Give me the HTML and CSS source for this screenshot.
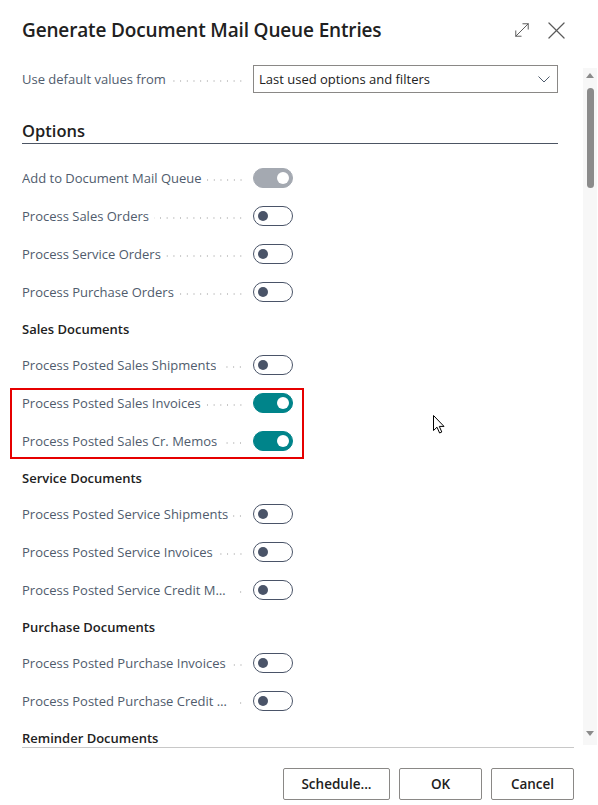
FILE: index.html
```html
<!DOCTYPE html>
<html lang="en">
<head>
<meta charset="utf-8">
<title>Generate Document Mail Queue Entries</title>
<link rel="stylesheet" href="styles.css">
</head>
<body>
<div class="dialog">
  <header class="head">
    <h1 class="title">Generate Document Mail Queue Entries</h1>
    <div class="head-icons">
      <svg class="icon-expand" width="18" height="18" viewBox="0 0 18 18" fill="none" stroke="#5a5a5a" stroke-width="1.1" stroke-linecap="round">
        <path d="M2 16 L16 2"/><path d="M10 2 H16 V8"/><path d="M2 10 V16 H8"/>
      </svg>
      <svg class="icon-close" width="18" height="18" viewBox="0 0 18 18" fill="none" stroke="#5a5a5a" stroke-width="1.3" stroke-linecap="round">
        <path d="M1 1 L17 17"/><path d="M17 1 L1 17"/>
      </svg>
    </div>
  </header>

  <div class="body">
    <div class="content">
      <div class="row row-default">
        <div class="label"><span class="txt">Use default values from</span><span class="leader"></span></div>
        <div class="select">
          <span>Last used options and filters</span>
          <svg width="12" height="7" viewBox="0 0 12 7" fill="none" stroke="#505c6d" stroke-width="1"><path d="M0.5 0.5 L6 6 L11.5 0.5"/></svg>
        </div>
      </div>

      <h2 class="section">Options</h2>

      <div class="rows">
        <div class="row"><div class="label"><span class="txt">Add to Document Mail Queue</span><span class="leader"></span></div><span class="toggle on disabled"></span></div>
        <div class="row"><div class="label"><span class="txt">Process Sales Orders</span><span class="leader"></span></div><span class="toggle"></span></div>
        <div class="row"><div class="label"><span class="txt">Process Service Orders</span><span class="leader"></span></div><span class="toggle"></span></div>
        <div class="row"><div class="label"><span class="txt">Process Purchase Orders</span><span class="leader"></span></div><span class="toggle"></span></div>

        <div class="group">Sales Documents</div>
        <div class="row"><div class="label"><span class="txt">Process Posted Sales Shipments</span><span class="leader"></span></div><span class="toggle"></span></div>
        <div class="highlight">
          <div class="row"><div class="label"><span class="txt">Process Posted Sales Invoices</span><span class="leader"></span></div><span class="toggle on"></span></div>
          <div class="row"><div class="label"><span class="txt">Process Posted Sales Cr. Memos</span><span class="leader"></span></div><span class="toggle on"></span></div>
        </div>

        <div class="group">Service Documents</div>
        <div class="row"><div class="label"><span class="txt">Process Posted Service Shipments</span><span class="leader"></span></div><span class="toggle"></span></div>
        <div class="row"><div class="label"><span class="txt">Process Posted Service Invoices</span><span class="leader"></span></div><span class="toggle"></span></div>
        <div class="row"><div class="label"><span class="txt">Process Posted Service Credit Memos</span><span class="leader"></span></div><span class="toggle"></span></div>

        <div class="group">Purchase Documents</div>
        <div class="row"><div class="label"><span class="txt">Process Posted Purchase Invoices</span><span class="leader"></span></div><span class="toggle"></span></div>
        <div class="row"><div class="label"><span class="txt">Process Posted Purchase Credit Memos</span><span class="leader"></span></div><span class="toggle"></span></div>

        <div class="group">Reminder Documents</div>
      </div>
    </div>
    <div class="scrollbar">
      <span class="arrow up"></span>
      <span class="thumb"></span>
      <span class="spacer"></span>
      <span class="arrow down"></span>
    </div>
  </div>

  <footer class="foot">
    <button class="btn btn-schedule">Schedule...</button>
    <button class="btn">OK</button>
    <button class="btn">Cancel</button>
  </footer>

  <svg class="cursor" width="12" height="19" viewBox="0 0 12 19">
    <path d="M0.5 0.5 V15.5 L4 12.2 L6.6 18 L8.8 17 L6.3 11.4 L11 11.4 Z" fill="#fff" stroke="#000" stroke-width="1" stroke-linejoin="round"/>
  </svg>
</div>
</body>
</html>
```

FILE: styles.css
```css
* { box-sizing: border-box; }

html, body {
  margin: 0;
  padding: 0;
  background: #ffffff;
}

body {
  font-family: "Open Sans", "Noto Sans", "Liberation Sans", sans-serif;
  color: #212121;
}

.dialog {
  position: relative;
  width: 598px;
  height: 805px;
  display: flex;
  flex-direction: column;
  overflow: hidden;
}

/* header */
.head {
  height: 60px;
  flex: none;
  display: flex;
  align-items: center;
  justify-content: space-between;
  padding: 0 33px 0 22px;
}

.title {
  margin: 0;
  font-size: 19px;
  font-weight: 600;
  letter-spacing: -0.15px;
  color: #212121;
  line-height: 24px;
}

.head-icons {
  display: flex;
  align-items: center;
  gap: 18px;
}

.icon-expand { width: 16px; height: 16px; }
.icon-close { width: 17px; height: 17px; }

/* body */
.body {
  flex: 1;
  display: flex;
  min-height: 0;
}

.content {
  flex: 1;
  min-width: 0;
  padding: 5px 25px 0 22px;
  overflow: hidden;
}

.row {
  display: flex;
  align-items: center;
  height: 38px;
}

.row-default {
  height: 28px;
}

.label {
  width: 231px;
  flex: none;
  display: flex;
  align-items: center;
  padding-right: 9px;
  min-width: 0;
}

.txt {
  font-size: 13px;
  color: #505c6d;
  white-space: nowrap;
  overflow: hidden;
  text-overflow: ellipsis;
  min-width: 0;
  flex: 0 1 auto;
  line-height: 18px;
}

.leader {
  flex: 1 0 9px;
  height: 2px;
  margin-left: 5px;
  margin-top: 3px;
  background-image: radial-gradient(circle, #c6c6c6 0.8px, transparent 1px);
  background-size: 6.7px 2px;
  background-position: right center;
  background-repeat: repeat-x;
}

.select {
  flex: 1;
  height: 28px;
  border: 1px solid #8a8886;
  display: flex;
  align-items: center;
  justify-content: space-between;
  padding: 0 7px 0 5px;
  font-size: 13px;
  color: #212121;
}

.section {
  margin: 26px 0 15px;
  height: 25px;
  line-height: 24px;
  font-size: 16.5px;
  font-weight: 600;
  color: #212121;
  border-bottom: 1px solid #4c5563;
}

.group {
  height: 35px;
  display: flex;
  align-items: center;
  font-size: 13px;
  font-weight: 600;
  color: #212121;
}

/* toggles */
.toggle {
  position: relative;
  width: 40px;
  height: 20px;
  border-radius: 10px;
  border: 1px solid #4a5468;
  background: #ffffff;
  flex: none;
}

.toggle::after {
  content: "";
  position: absolute;
  top: 4px;
  left: 4px;
  width: 10px;
  height: 10px;
  border-radius: 50%;
  background: #4a5468;
}

.toggle.on {
  background: #00848a;
  border-color: #00848a;
}

.toggle.on::after {
  left: auto;
  right: 3px;
  top: 3px;
  width: 12px;
  height: 12px;
  background: #ffffff;
}

.toggle.on.disabled {
  background: #a4a9b1;
  border-color: #a4a9b1;
}

/* highlight box */
.highlight {
  position: relative;
}

.highlight::after {
  content: "";
  position: absolute;
  top: 4px;
  bottom: 1px;
  left: -12px;
  width: 290px;
  border: 2px solid #e60000;
  pointer-events: none;
}

/* scrollbar */
.scrollbar {
  width: 14px;
  flex: none;
  margin: 8px 1px 2px 0;
  background: #f7f7f7;
  display: flex;
  flex-direction: column;
  align-items: center;
}

.arrow {
  width: 0;
  height: 0;
  border-left: 4px solid transparent;
  border-right: 4px solid transparent;
  margin-top: 5px;
}

.arrow.up {
  border-bottom: 5px solid #8b8b8b;
}

.arrow.down {
  border-top: 5px solid #8b8b8b;
  margin: 0 0 9px;
}

.thumb {
  width: 7px;
  height: 100px;
  margin-top: 10px;
  border-radius: 4px;
  background: #8b8b8b;
}

.spacer { flex: 1; }

/* footer */
.foot {
  flex: none;
  height: 58px;
  margin: 0 24px 0 22px;
  border-top: 1px solid #c8c8c8;
  display: flex;
  justify-content: flex-end;
  align-items: flex-start;
  gap: 9px;
  padding-top: 20px;
}

.btn {
  height: 32px;
  width: 83px;
  border: 1px solid #8a8886;
  border-radius: 2px;
  background: #ffffff;
  font-family: "Open Sans", "Noto Sans", sans-serif;
  font-size: 13.5px;
  font-weight: 600;
  color: #212121;
  padding: 0;
}

.btn-schedule { width: 107px; }

.cursor {
  position: absolute;
  left: 433px;
  top: 415px;
}
```
